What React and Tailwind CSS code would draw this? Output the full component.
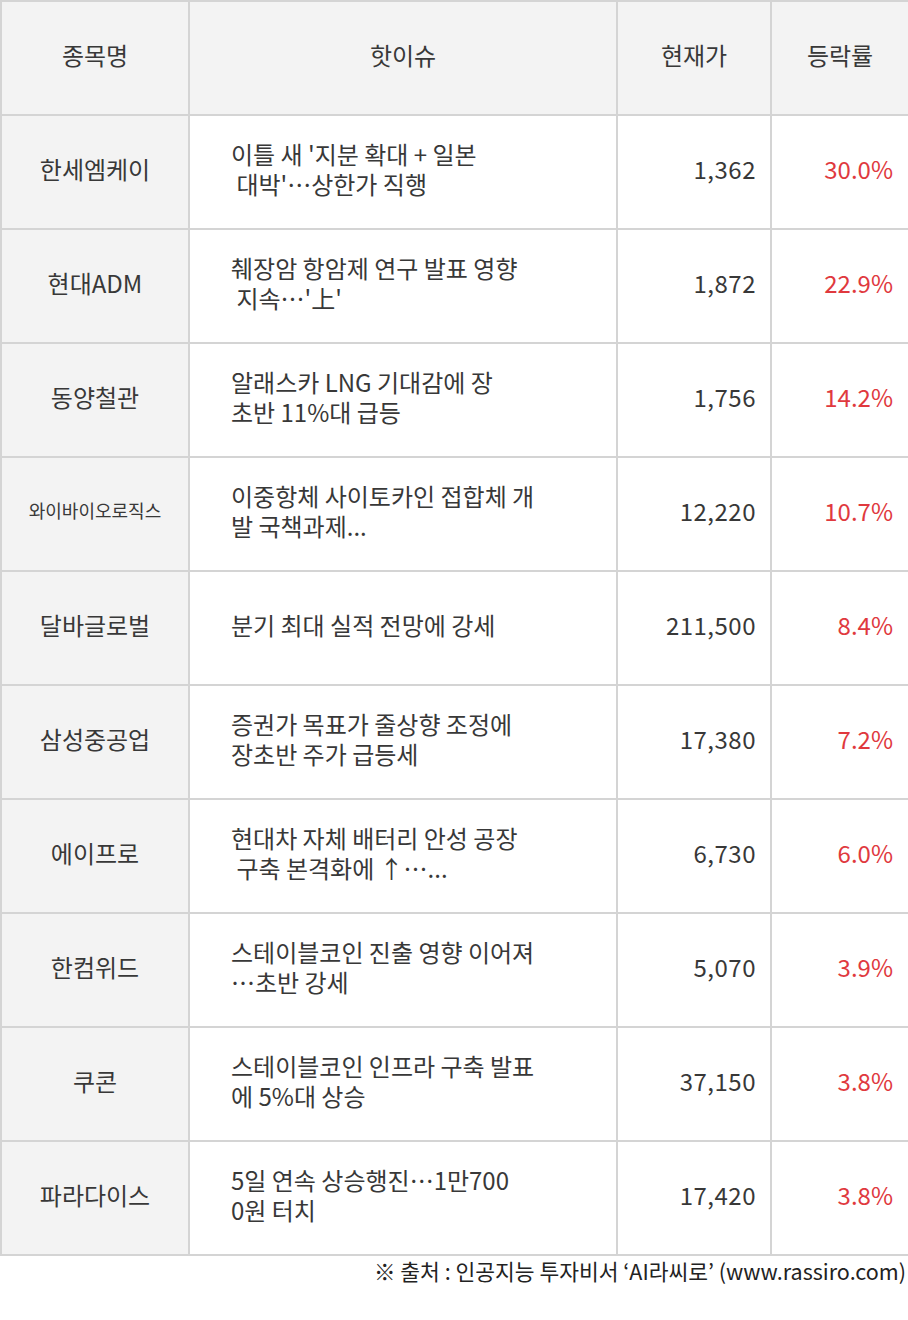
const rows = [
  { name: "한세엠케이", issue: ["이틀 새 '지분 확대 + 일본", " 대박'…상한가 직행"], price: "1,362", rate: "30.0%" },
  { name: "현대ADM", issue: ["췌장암 항암제 연구 발표 영향", " 지속…'上'"], price: "1,872", rate: "22.9%" },
  { name: "동양철관", issue: ["알래스카 LNG 기대감에 장", "초반 11%대 급등"], price: "1,756", rate: "14.2%" },
  { name: "와이바이오로직스", small: true, issue: ["이중항체 사이토카인 접합체 개", "발 국책과제..."], price: "12,220", rate: "10.7%" },
  { name: "달바글로벌", issue: ["분기 최대 실적 전망에 강세"], price: "211,500", rate: "8.4%" },
  { name: "삼성중공업", issue: ["증권가 목표가 줄상향 조정에", "장초반 주가 급등세"], price: "17,380", rate: "7.2%" },
  { name: "에이프로", issue: ["현대차 자체 배터리 안성 공장", " 구축 본격화에 ↑…..."], price: "6,730", rate: "6.0%" },
  { name: "한컴위드", issue: ["스테이블코인 진출 영향 이어져", "…초반 강세"], price: "5,070", rate: "3.9%" },
  { name: "쿠콘", issue: ["스테이블코인 인프라 구축 발표", "에 5%대 상승"], price: "37,150", rate: "3.8%" },
  { name: "파라다이스", issue: ["5일 연속 상승행진…1만700", "0원 터치"], price: "17,420", rate: "3.8%" },
];

const App = () => {
  return (
    <div
      className="w-[908px] h-[1320px] bg-white text-[#383838]"
      style={{ fontFamily: '"Noto Sans CJK KR", "Noto Sans", sans-serif' }}
    >
      <table className="table-fixed border-collapse w-[908px]">
        <colgroup>
          <col className="w-[188px]" />
          <col className="w-[428px]" />
          <col className="w-[154px]" />
          <col className="w-[138px]" />
        </colgroup>
        <thead>
          <tr className="h-[114px] bg-[#f3f3f3]">
            <th className="border-2 border-[#d4d4d4] pb-[7px] font-normal text-[24px] text-center">종목명</th>
            <th className="border-2 border-[#d4d4d4] pb-[7px] font-normal text-[24px] text-center">핫이슈</th>
            <th className="border-2 border-[#d4d4d4] pb-[7px] font-normal text-[24px] text-center">현재가</th>
            <th className="border-2 border-[#d4d4d4] pb-[7px] font-normal text-[24px] text-center">등락률</th>
          </tr>
        </thead>
        <tbody>
          {rows.map((r, i) => (
            <tr key={i} className="h-[114px]">
              <td
                className={
                  r.small
                    ? "border-2 border-[#d4d4d4] bg-[#f3f3f3] pb-[7px] text-center text-[18px]"
                    : "border-2 border-[#d4d4d4] bg-[#f3f3f3] pb-[7px] text-center text-[24px]"
                }
              >
                {r.name}
              </td>
              <td className="border-2 border-[#d4d4d4] pl-[41px] pb-[7px] text-[24px] leading-[30px] whitespace-pre">
                {r.issue.map((line, j) => (
                  <div key={j}>{line}</div>
                ))}
              </td>
              <td className="border-2 border-[#d4d4d4] pr-[14px] pb-[7px] text-right text-[24px] tracking-[0.5px]">{r.price}</td>
              <td className="border-2 border-[#d4d4d4] pr-[15px] pb-[7px] text-right text-[24px] text-[#e0393e]">{r.rate}</td>
            </tr>
          ))}
        </tbody>
      </table>
      <p className="text-right text-[21.5px] leading-[30px] text-[#222222] pr-[2px]">
        ※ 출처 : 인공지능 투자비서 ‘AI라씨로’ (www.rassiro.com)
      </p>
    </div>
  );
};

export default App;
